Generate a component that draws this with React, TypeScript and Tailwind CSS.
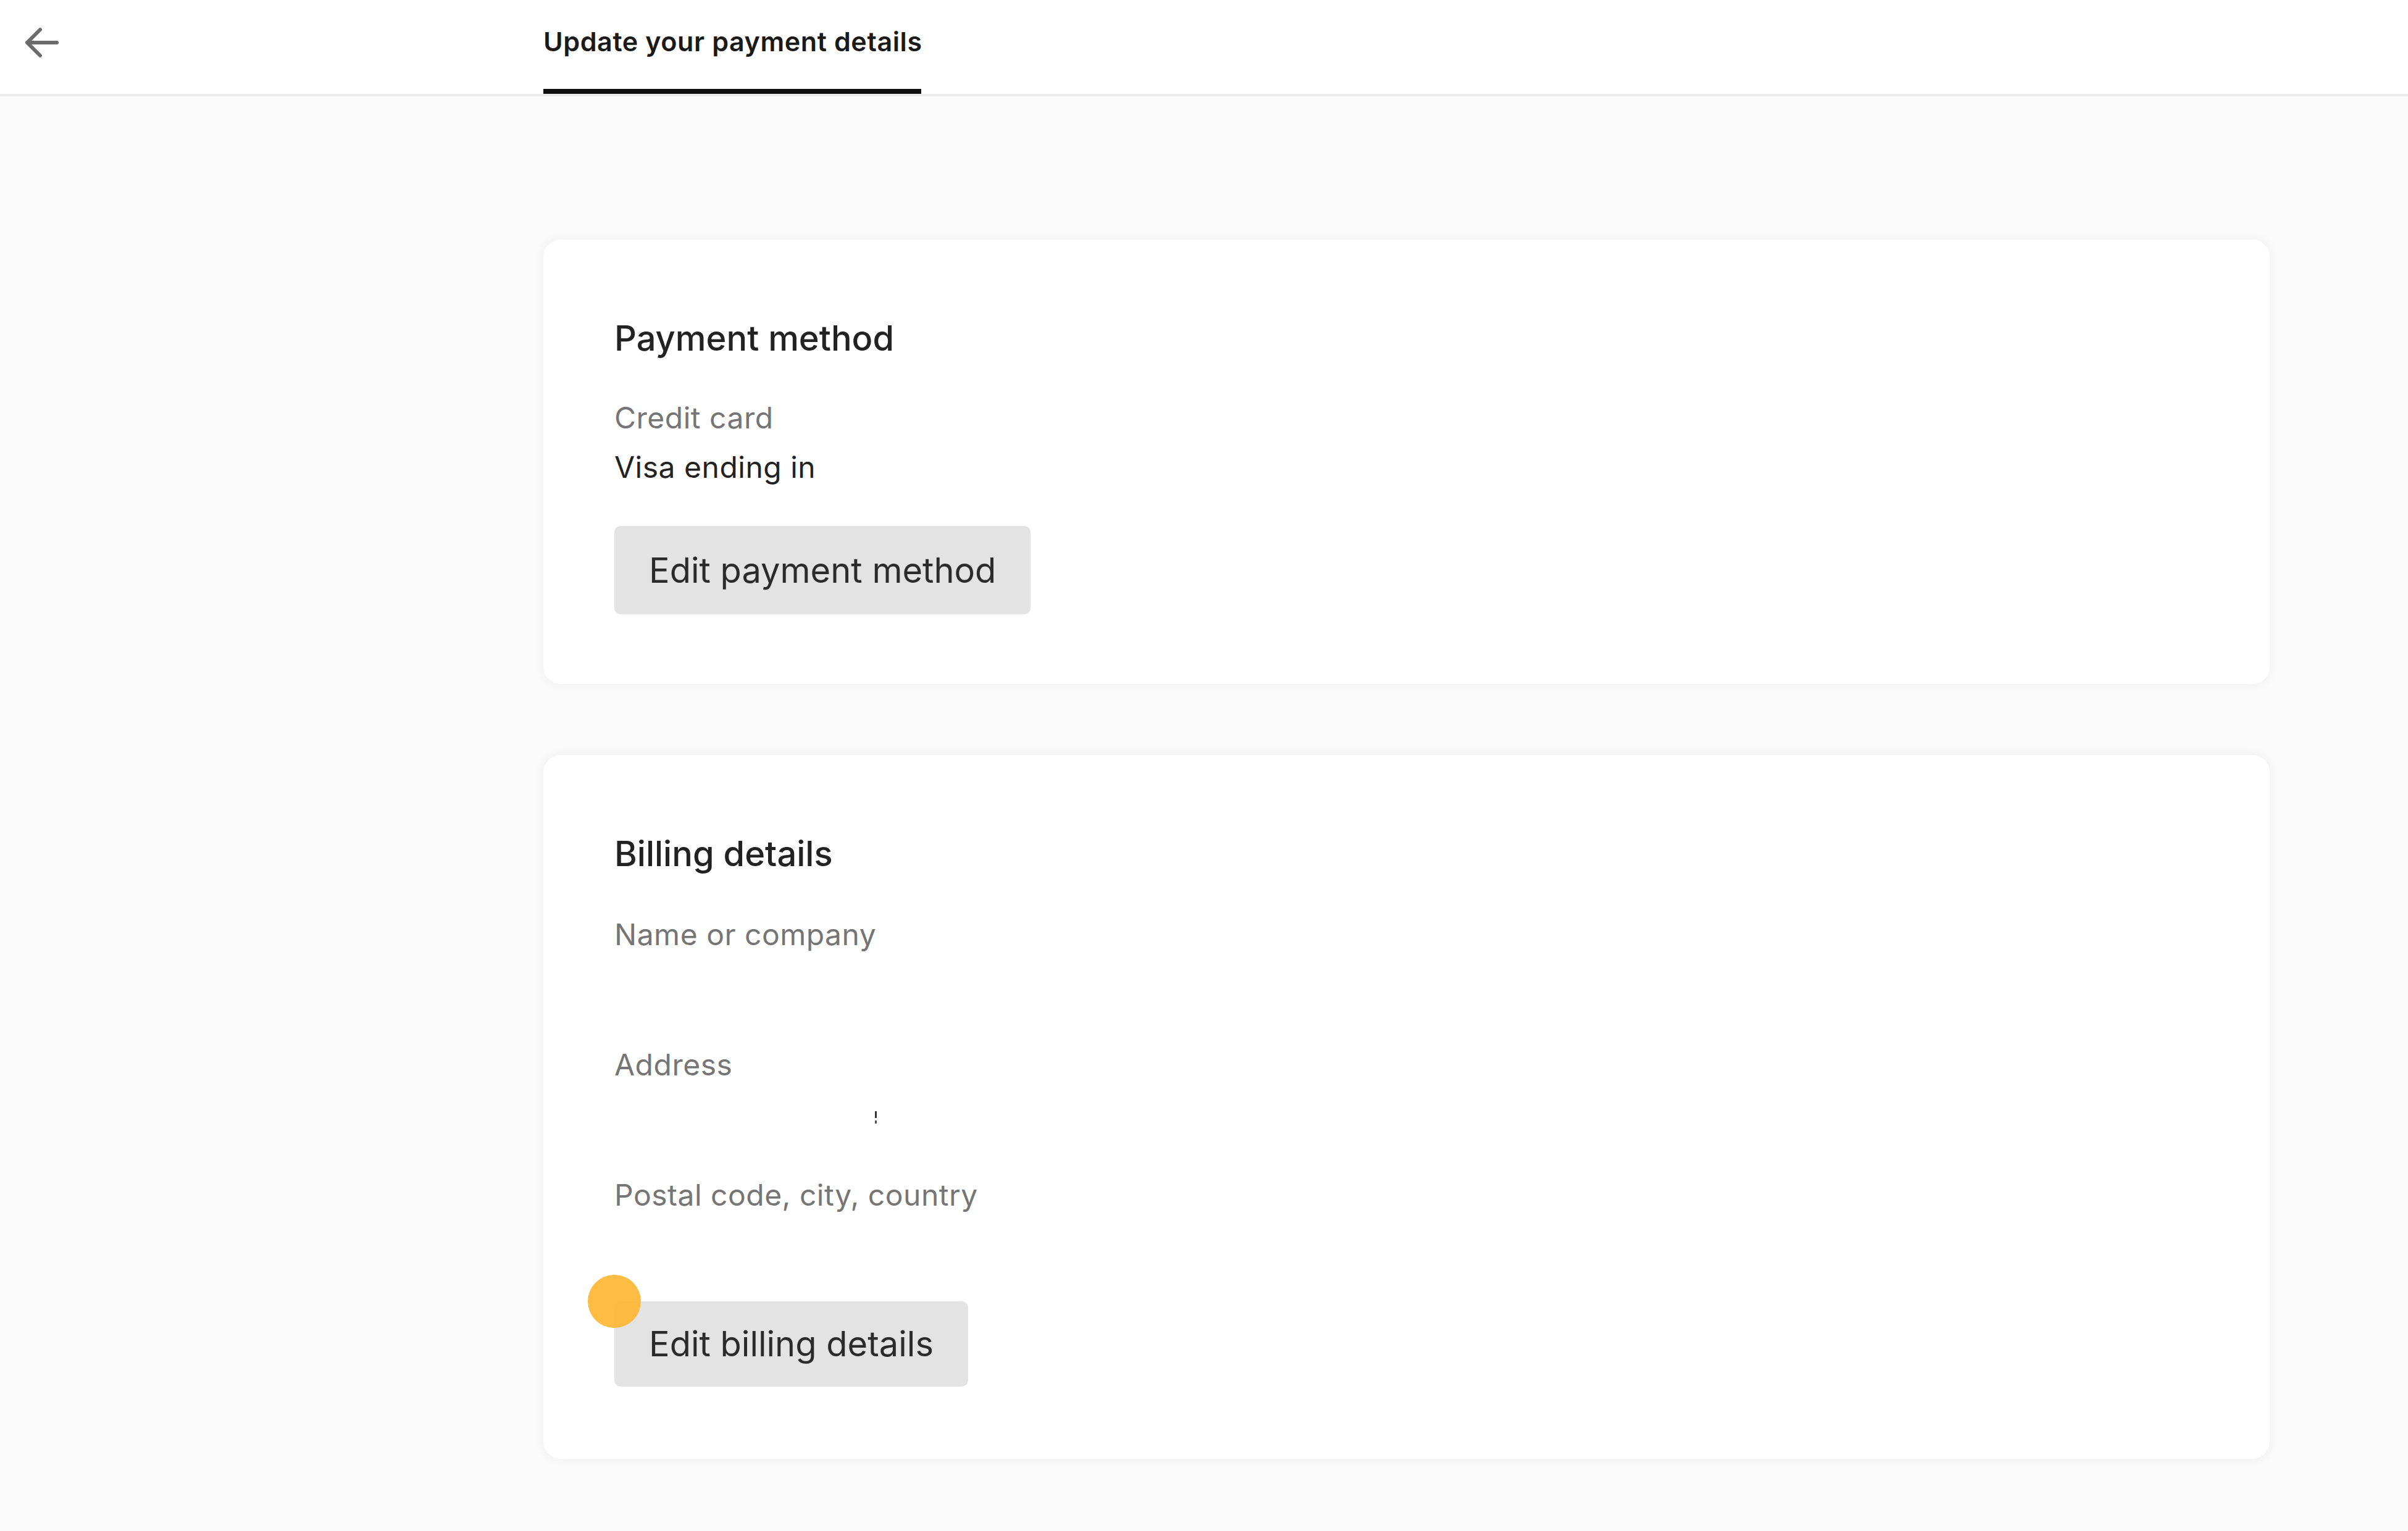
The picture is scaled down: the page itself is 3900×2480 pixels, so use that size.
export default function App() {
  const font = { fontFamily: "Inter, 'Noto Sans', sans-serif" };

  return (
    <div className="min-h-screen bg-[#fafafa] text-[#222222]" style={font}>
      {/* Top bar */}
      <header className="flex h-[156px] bg-white border-b-[4px] border-[#ebebeb]">
        <div className="w-[880px] flex items-start pl-[39px] pt-[44px]">
          <button className="text-[#6b6b6b]">
            <svg width="56" height="50" viewBox="0 0 56 50" fill="none">
              <path
                d="M53 25H5M26 4L5 25L26 46"
                stroke="currentColor"
                strokeWidth="6"
                strokeLinecap="round"
                strokeLinejoin="round"
              />
            </svg>
          </button>
        </div>
        <div className="flex flex-col w-[612px]">
          <div className="pt-[39px] h-[144px] text-[43px] leading-[56px] font-semibold tracking-[0.6px] text-[#1a1a1a] whitespace-nowrap">
            Update your payment details
          </div>
          <div className="h-[8px] bg-[#111111]" />
        </div>
      </header>

      {/* Content */}
      <main className="flex pt-[232px] pb-[117px]">
        <div className="w-[880px] shrink-0" />
        <div className="w-[2796px] flex flex-col gap-[115px]">
          {/* Payment method */}
          <section className="bg-white rounded-[28px] shadow-[0_0_18px_rgba(0,0,0,0.05)] pl-[115px] pt-[125px] pb-[113px]">
            <h2 className="text-[56px] leading-[70px] font-medium">Payment method</h2>
            <div className="mt-[54px] text-[48px] leading-[80px] tracking-[0.5px]">
              <div className="text-[#757575]">Credit card</div>
              <div className="text-[#222222]">Visa ending in</div>
            </div>
            <button className="mt-[55px] h-[143px] px-[56px] rounded-[10px] bg-[#e3e3e3] text-[56px] text-[#2b2b2b]">
              Edit payment method
            </button>
          </section>

          {/* Billing details */}
          <section className="bg-white rounded-[28px] shadow-[0_0_18px_rgba(0,0,0,0.05)] pl-[115px] pt-[125px] pb-[117px]">
            <h2 className="text-[56px] leading-[70px] font-medium">Billing details</h2>
            <div className="mt-[56px] flex flex-col gap-[51px] text-[48px] leading-[80px] tracking-[0.5px]">
              <div>
                <div className="text-[#757575]">Name or company</div>
                <div className="h-[80px]" />
              </div>
              <div>
                <div className="text-[#757575]">Address</div>
                <div className="h-[80px] flex flex-col pl-[422px] pt-[35px] gap-[4px]">
                  <span className="w-[3px] h-[11px] bg-[#333333]" />
                  <span className="w-[3px] h-[5px] bg-[#555555]" />
                </div>
              </div>
              <div>
                <div className="text-[#757575]">Postal code, city, country</div>
                <div className="h-[80px]" />
              </div>
            </div>
            <div className="relative mt-[52px] inline-block">
              <button className="h-[138px] px-[56px] rounded-[10px] bg-[#e3e3e3] text-[56px] text-[#2b2b2b]">
                Edit billing details
              </button>
              <span className="absolute -left-[43px] -top-[43px] w-[86px] h-[86px] rounded-full bg-[#ffb52e]/90" />
            </div>
          </section>
        </div>
      </main>
    </div>
  );
}
